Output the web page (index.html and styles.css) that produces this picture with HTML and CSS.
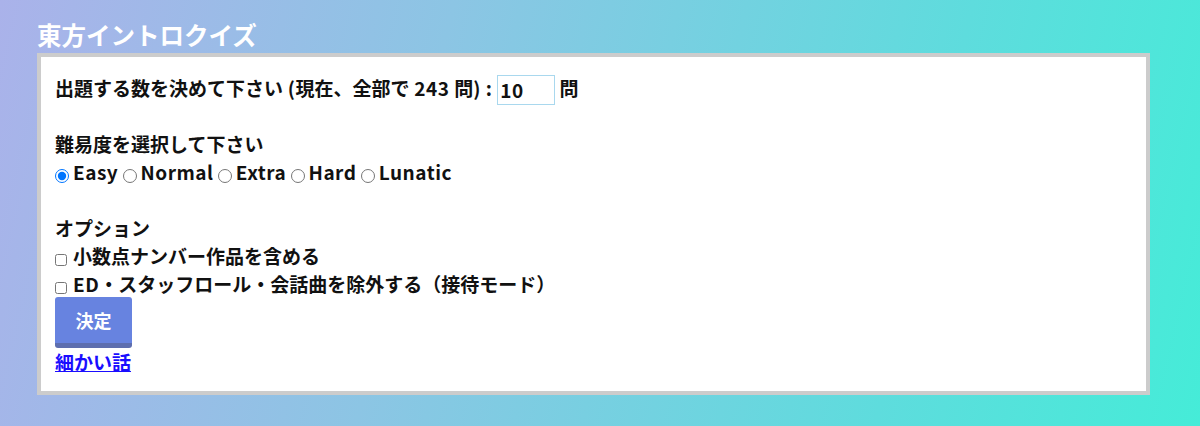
FILE: index.html
```html
<!DOCTYPE html>
<html lang="ja">
<head>
<meta charset="utf-8">
<title>東方イントロクイズ</title>
<link rel="stylesheet" href="styles.css">
</head>
<body>
<div class="page">
  <h1 class="title">東方イントロクイズ</h1>
  <div class="panel">
    <div class="line">出題する数を決めて下さい<span class="lat"> (</span>現在、全部で<span class="lat"> 243 </span>問<span class="lat">) : </span><input class="num" type="text" value="10"> 問</div>
    <div class="gap"></div>
    <div class="line">難易度を選択して下さい</div>
    <div class="line"><label class="opt"><input class="radio" type="radio" name="lv" checked><span class="lat">Easy</span></label> <label class="opt"><input class="radio" type="radio" name="lv"><span class="lat">Normal</span></label> <label class="opt"><input class="radio" type="radio" name="lv"><span class="lat">Extra</span></label> <label class="opt"><input class="radio" type="radio" name="lv"><span class="lat">Hard</span></label> <label class="opt"><input class="radio" type="radio" name="lv"><span class="lat">Lunatic</span></label></div>
    <div class="gap"></div>
    <div class="line">オプション</div>
    <div class="line"><label class="opt"><input class="check" type="checkbox">小数点ナンバー作品を含める</label></div>
    <div class="line"><label class="opt"><input class="check" type="checkbox"><span class="lat">ED</span>・スタッフロール・会話曲を除外する（接待モード）</label></div>
    <button class="submit" type="button">決定</button>
    <div class="line"><a class="more" href="#">細かい話</a></div>
  </div>
</div>
</body>
</html>
```

FILE: styles.css
```css
html, body {
  margin: 0;
  padding: 0;
}
body {
  width: 1200px;
  height: 426px;
  overflow: hidden;
  background: linear-gradient(103deg, #aab2ea 0%, #8cc5e4 35%, #5edcdd 75%, #45ecd8 100%);
  font-family: "Noto Sans CJK JP", "Noto Sans", sans-serif;
  font-weight: bold;
  color: #111;
}
.page {
  padding-top: 18px;
}
.title {
  margin: 0 0 1px 37px;
  font-size: 24.5px;
  line-height: 34px;
  font-weight: bold;
  color: #fff;
}
.panel {
  margin: 0 50px 0 37px;
  border: 4px solid #cccccc;
  background: #fff;
  padding: 17px 14px 15px 14px;
  font-size: 19px;
}
.line {
  line-height: 28px;
  height: 28px;
  white-space: nowrap;
}
.gap {
  height: 28px;
}
.lat {
  letter-spacing: 0.5px;
}
.num {
  width: 58px;
  height: 30px;
  box-sizing: border-box;
  border: 1px solid #a9d8ee;
  padding: 0 2px;
  margin: 0;
  font-family: inherit;
  font-weight: bold;
  font-size: 19px;
  letter-spacing: 0.5px;
  color: #111;
  vertical-align: middle;
  position: relative;
  top: -1px;
  outline: none;
}
.opt {
  display: inline;
}
.radio {
  width: 14px;
  height: 14px;
  margin: 0 4px 0 0;
  vertical-align: -3px;
}
.check {
  width: 12px;
  height: 12px;
  margin: 0 6px 0 0;
  vertical-align: -2px;
}
.submit {
  display: block;
  width: 77px;
  height: 51px;
  margin: -1px 0 0 0;
  padding: 0;
  border: 0;
  border-bottom: 5px solid #5d6eaf;
  border-radius: 3px;
  background: #6783e0;
  color: #fff;
  font-family: inherit;
  font-weight: bold;
  font-size: 18px;
  line-height: 46px;
}
.more {
  color: #1a0dff;
  text-decoration: underline;
}
```
